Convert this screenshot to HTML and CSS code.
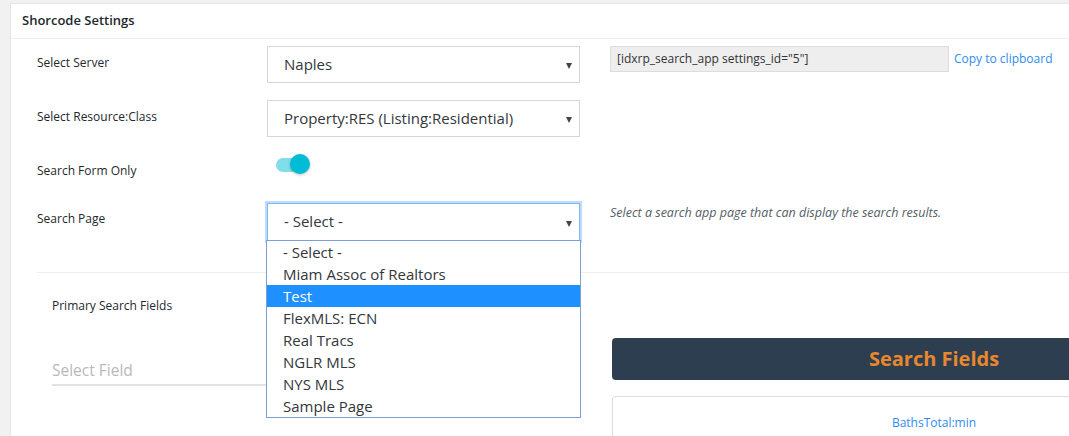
FILE: index.html
```html
<!DOCTYPE html>
<html>
<head>
<meta charset="utf-8">
<link rel="stylesheet" href="styles.css">
</head>
<body>
<div class="wrap">
  <div class="panel">
    <div class="panel-head">Shorcode Settings</div>
    <div class="form">
      <div class="row">
        <div class="label">Select Server</div>
        <div class="control"><div class="select">Naples<span class="arrow"></span></div></div>
        <div class="side">
          <div class="shortcode">[idxrp_search_app settings_id="5"]</div>
          <a class="copy">Copy to clipboard</a>
        </div>
      </div>
      <div class="row">
        <div class="label">Select Resource:Class</div>
        <div class="control"><div class="select">Property:RES (Listing:Residential)<span class="arrow"></span></div></div>
        <div class="side"></div>
      </div>
      <div class="row row-short">
        <div class="label">Search Form Only</div>
        <div class="control"><div class="toggle"><span class="track"></span><span class="knob"></span></div></div>
        <div class="side"></div>
      </div>
      <div class="row">
        <div class="label">Search Page</div>
        <div class="control">
          <div class="select focus">- Select -<span class="arrow"></span></div>
          <ul class="dropdown">
            <li>- Select -</li>
            <li>Miam Assoc of Realtors</li>
            <li class="hl">Test</li>
            <li>FlexMLS: ECN</li>
            <li>Real Tracs</li>
            <li>NGLR MLS</li>
            <li>NYS MLS</li>
            <li>Sample Page</li>
          </ul>
        </div>
        <div class="side"><p class="hint">Select a search app page that can display the search results.</p></div>
      </div>
    </div>
    <div class="fields">
      <div class="fields-left">
        <div class="fields-label">Primary Search Fields</div>
        <div class="field-input">Select Field</div>
      </div>
      <div class="fields-right">
        <div class="bar">Search Fields</div>
        <div class="card"><span class="card-item">BathsTotal:min</span></div>
      </div>
    </div>
  </div>
</div>
</body>
</html>
```

FILE: styles.css
```css
* { box-sizing: border-box; }
html, body { margin: 0; padding: 0; }
body {
  width: 1069px;
  height: 436px;
  overflow: hidden;
  background: #f1f1f1;
  font-family: "Open Sans", "Noto Sans", sans-serif;
  color: #23282d;
}
.wrap {
  padding: 3px 0 0 10px;
  width: 1069px;
  height: 436px;
  overflow: hidden;
}
.panel {
  background: #fff;
  border-left: 1px solid #e5e5e5;
  border-top: 1px solid #e5e5e5;
  width: 1300px;
  height: 460px;
}
.panel-head {
  height: 35px;
  line-height: 33px;
  padding-left: 11px;
  font-size: 13px;
  font-weight: 600;
  border-bottom: 1px solid #eeeeee;
}
.form {
  padding: 7px 0 0 26px;
}
.row {
  display: grid;
  grid-template-columns: 230px 313px 673px;
  height: 54px;
}
.row-short {
  height: 48px;
}
.label {
  font-size: 12px;
  padding-top: 9px;
  line-height: 16px;
}
.control {
  position: relative;
}
.select {
  position: relative;
  height: 37px;
  border: 1px solid #d3d6da;
  padding-left: 16px;
  font-size: 15px;
  line-height: 35px;
  color: #32373c;
  background: #fff;
}
.select.focus {
  margin-top: 1px;
  height: 38px;
  border-color: #80b6ee;
  box-shadow: 0 0 0 2px #bcdbfd;
}
.arrow {
  position: absolute;
  right: 7px;
  top: 16px;
  width: 0;
  height: 0;
  border-left: 3.5px solid transparent;
  border-right: 3.5px solid transparent;
  border-top: 6px solid #444;
}
.select.focus .arrow { top: 17px; }
.side {
  display: flex;
  align-items: flex-start;
  padding-left: 30px;
}
.shortcode {
  width: 339px;
  height: 26px;
  background: #eeeeee;
  border: 1px solid #dddddd;
  font-size: 12px;
  line-height: 24px;
  padding-left: 6px;
  color: #333;
}
.copy {
  margin-left: 5px;
  font-size: 12px;
  line-height: 26px;
  color: #2e8cf0;
}
.toggle {
  position: relative;
  width: 44px;
  height: 22px;
  margin-left: 9px;
  margin-top: 0px;
}
.track {
  position: absolute;
  left: 0;
  top: 4px;
  width: 30px;
  height: 14px;
  border-radius: 7px;
  background: #80deea;
}
.knob {
  position: absolute;
  left: 14px;
  top: 0;
  width: 20px;
  height: 20px;
  border-radius: 50%;
  background: #00bcd4;
  box-shadow: 0 1px 3px rgba(0,0,0,0.25);
}
.hint {
  margin: 2px 0 0;
  font-size: 12.5px;
  font-style: italic;
  color: #555d66;
}
.dropdown {
  position: absolute;
  left: -1px;
  top: 38px;
  width: 315px;
  margin: 0;
  padding: 0;
  list-style: none;
  background: #fff;
  border: 1px solid #7d9fd6;
  z-index: 5;
}
.dropdown li {
  height: 22px;
  line-height: 22px;
  padding-left: 16px;
  font-size: 15px;
  color: #32373c;
}
.dropdown li.hl {
  background: #1e90ff;
  color: #fff;
}
.fields {
  margin-left: 26px;
  margin-top: 16px;
  border-top: 1px solid #eeeeee;
  display: flex;
}
.fields-left {
  width: 575px;
  padding-left: 15px;
}
.fields-label {
  font-size: 12px;
  margin-top: 25px;
  line-height: 16px;
}
.field-input {
  margin-top: 45px;
  width: 528px;
  border-bottom: 2px solid #e2e2e2;
  font-size: 15.5px;
  color: #b9b9b9;
  line-height: 22px;
  padding-bottom: 3px;
}
.fields-right {
  width: 644px;
  padding-top: 65px;
}
.bar {
  height: 42px;
  background: #2c3e50;
  border-radius: 4px;
  color: #e8872e;
  font-weight: 700;
  font-size: 20px;
  text-align: center;
  line-height: 42px;
}
.card {
  margin-top: 16px;
  height: 60px;
  border: 1px solid #dddddd;
  border-radius: 3px;
  text-align: center;
  padding-top: 13px;
}
.card-item {
  font-size: 12px;
  color: #2e8cf0;
}
```
